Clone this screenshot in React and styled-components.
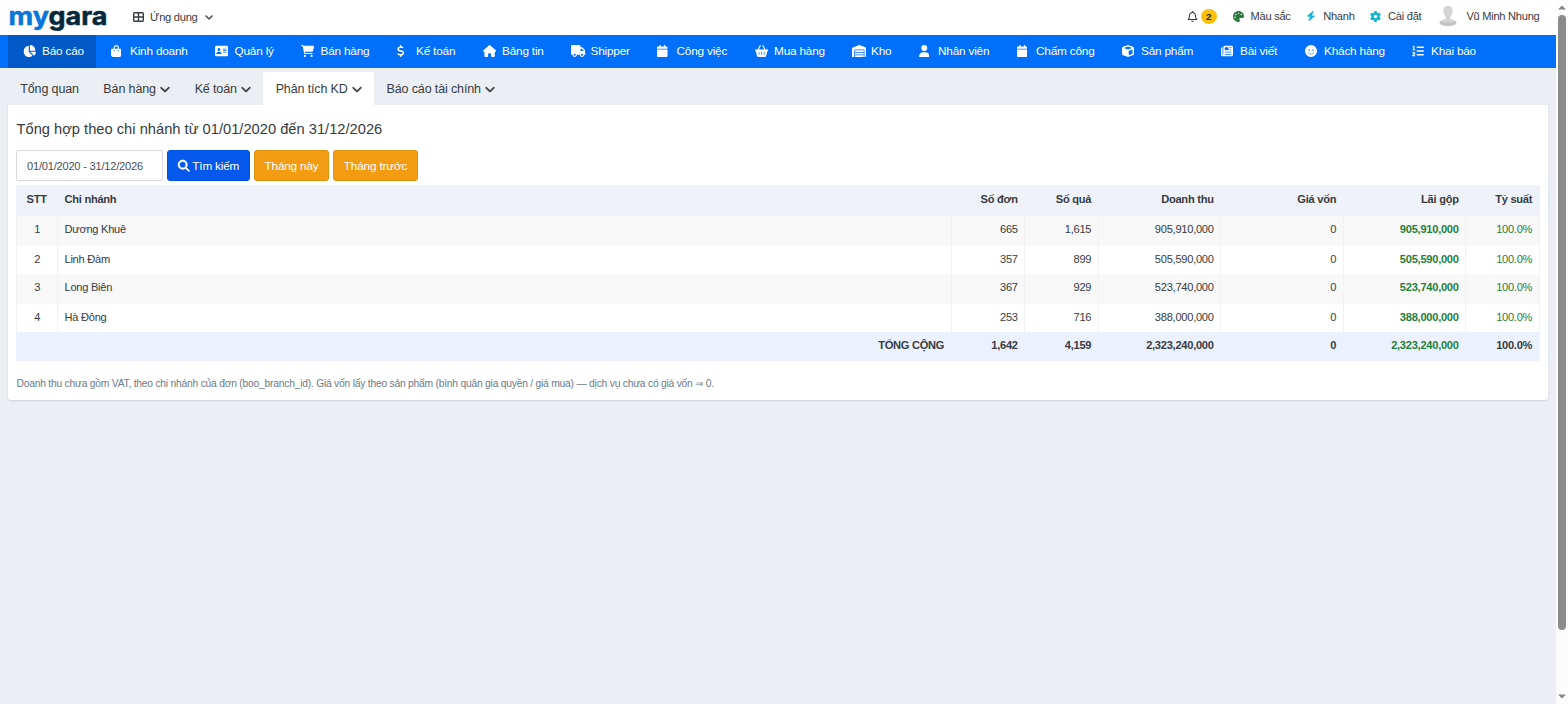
import React from 'react';
import styled, { createGlobalStyle } from 'styled-components';
import {
  FaChartPie, FaBagShopping, FaAddressCard, FaCartShopping, FaDollarSign, FaHouse, FaTruck,
  FaCalendar, FaBasketShopping, FaWarehouse, FaUser, FaCube, FaNewspaper, FaFaceSmile,
  FaListOl, FaChevronDown, FaRegBell, FaPalette, FaBolt, FaGear, FaMagnifyingGlass,
} from 'react-icons/fa6';

const GlobalStyle = createGlobalStyle`
  * { box-sizing: border-box; }
  html, body { margin: 0; height: 100%; overflow: hidden; }
  body {
    background: #ebeef3;
    color: #373b41;
    font-family: "Liberation Sans", Arial, sans-serif;
    font-size: 11.1px;
    letter-spacing: -0.26px;
  }
`;

const Screen = styled.div`
  display: flex;
  height: 704px;
  width: 1568px;
`;

const Page = styled.div`
  flex: 1;
  min-width: 0;
`;

const TopBar = styled.header`
  display: flex;
  align-items: center;
  height: 35px;
  padding: 0 16.5px 3px 8px;
  background: #fff;
  white-space: nowrap;
`;

const Logo = styled.svg`
  display: block;
  width: 102px;
  height: 32px;
  letter-spacing: 0;
  text {
    font: 700 25px Inter, sans-serif;
    stroke-width: 0.5px;
  }
`;

const AppsMenu = styled.div`
  display: flex;
  align-items: center;
  padding: 1px 0 0 23px;
  span { margin: 0 7px 0 6px; }
`;

const TopLinks = styled.div`
  display: flex;
  align-items: center;
  margin-left: auto;
`;

const TopLink = styled.div`
  display: flex;
  align-items: center;
  gap: ${(p) => p.$gap}px;
  margin-left: ${(p) => p.$space}px;
  svg { color: ${(p) => p.$color}; flex: none; }
`;

const CountBadge = styled.span`
  width: 16px;
  height: 15px;
  border-radius: 8px;
  background: #fec10b;
  color: #222;
  font-weight: 700;
  font-size: 9.8px;
  line-height: 15px;
  text-align: center;
`;

const NavBar = styled.nav`
  display: flex;
  height: 33px;
  padding-left: 8px;
  background: #006ffa;
  color: #fff;
  font-size: 11.8px;
  letter-spacing: -0.2px;
  white-space: nowrap;
`;

const NavItem = styled.a`
  display: flex;
  align-items: center;
  flex: none;
  width: ${(p) => p.$width}px;
  padding: 0 0 1px 14.5px;
  background: ${(p) => (p.$active ? '#0059c6' : 'transparent')};
`;

const NavIcon = styled.span`
  display: flex;
  flex: none;
  width: 19.5px;
  svg {
    flex: none;
    width: ${(p) => p.$width}px;
    height: 12px;
  }
`;

const Tabs = styled.div`
  display: flex;
  height: 37px;
  padding: 4px 8px 0;
  font-size: 12.5px;
  letter-spacing: -0.13px;
  white-space: nowrap;
`;

const Chevron = styled(FaChevronDown)`
  width: ${(p) => p.$size}px;
  height: ${(p) => p.$size}px;
  stroke: currentColor;
  stroke-width: 32px;
  overflow: visible;
`;

const Tab = styled.a`
  display: flex;
  align-items: center;
  gap: 4.3px;
  padding: 0 12.25px;
  background: ${(p) => (p.$active ? '#fff' : 'transparent')};
  border-radius: 3px 3px 0 0;
`;

const Panel = styled.main`
  height: 295px;
  margin: 0 8px;
  padding: 0 8px;
  background: #fff;
  border-radius: 0 0 3px 3px;
  box-shadow: 0 1px 2px rgba(40, 60, 90, 0.16);
`;

const Title = styled.h1`
  height: 45px;
  margin: 0;
  padding-left: 0.5px;
  font-size: 14.7px;
  font-weight: 400;
  letter-spacing: 0;
  line-height: 48px;
`;

const Filters = styled.div`
  display: flex;
  gap: 4px;
  height: 35px;
`;

const DateField = styled.div`
  width: 147px;
  height: 31px;
  padding-left: 10px;
  border: 1px solid #d5d8dc;
  border-radius: 2px;
  letter-spacing: -0.22px;
  line-height: 30px;
  color: #4b4f55;
`;

const Button = styled.button`
  display: flex;
  align-items: center;
  justify-content: center;
  gap: 3px;
  width: ${(p) => p.$width}px;
  height: 31px;
  padding: 1px 0 0;
  border: 1px solid ${(p) => (p.$primary ? '#0050dc' : '#e0900c')};
  border-radius: 3px;
  background: ${(p) => (p.$primary ? '#0459ec' : '#f39c12')};
  color: #fff;
  font: 11.8px "Liberation Sans", Arial, sans-serif;
  letter-spacing: -0.2px;
  svg { stroke: currentColor; stroke-width: 26px; overflow: visible; }
`;

const Table = styled.table`
  width: 1523.5px;
  table-layout: fixed;
  border-collapse: separate;
  border-spacing: 0;
`;

const Row = styled.tr`
  height: ${(p) => p.$height}px;
  background: ${(p) => p.$bg};
  td, th {
    padding-bottom: ${(p) => p.$bottom ?? 3}px;
    border-right: 1px solid ${(p) => p.$line};
  }
  td:first-child { border-left: 1px solid ${(p) => p.$line}; }
`;

const Cell = styled.td`
  padding: 0 6.3px 0 7px;
  line-height: 14px;
  text-align: ${(p) => p.$align || 'right'};
  font-weight: ${(p) => (p.$bold ? 700 : 400)};
  color: ${(p) => (p.$green ? '#1f8038' : 'inherit')};
`;

const Note = styled.p`
  margin: 16px 0 0;
  padding-left: 0.5px;
  font-size: 10.3px;
  letter-spacing: -0.23px;
  line-height: 14px;
  color: #6c7a89;
`;

const ScrollTrack = styled.div`
  display: flex;
  flex-direction: column;
  align-items: center;
  width: 12px;
  padding: 5px 0 5px;
  background: #fcfcfc;
  svg { display: block; }
`;

const ScrollThumb = styled.div`
  width: 8px;
  height: 615px;
  margin: 5px 0 auto;
  border-radius: 4px;
  background: #8b8b8b;
`;

const navItems = [
  { label: 'Báo cáo', Icon: FaChartPie, icon: 13, width: 88, active: true },
  { label: 'Kinh doanh', Icon: FaBagShopping, icon: 10.5, width: 104.5 },
  { label: 'Quản lý', Icon: FaAddressCard, icon: 13, width: 86 },
  { label: 'Bán hàng', Icon: FaCartShopping, icon: 13.2, width: 95.5 },
  { label: 'Kế toán', Icon: FaDollarSign, icon: 7.5, width: 86 },
  { label: 'Bảng tin', Icon: FaHouse, icon: 13.2, width: 88.5 },
  { label: 'Shipper', Icon: FaTruck, icon: 14.7, width: 86 },
  { label: 'Công việc', Icon: FaCalendar, icon: 10.5, width: 97.5 },
  { label: 'Mua hàng', Icon: FaBasketShopping, icon: 13.2, width: 97 },
  { label: 'Kho', Icon: FaWarehouse, icon: 14.7, width: 67 },
  { label: 'Nhân viên', Icon: FaUser, icon: 10.5, width: 98 },
  { label: 'Chấm công', Icon: FaCalendar, icon: 10.5, width: 105 },
  { label: 'Sản phẩm', Icon: FaCube, icon: 12, width: 99 },
  { label: 'Bài viết', Icon: FaNewspaper, icon: 12, width: 84 },
  { label: 'Khách hàng', Icon: FaFaceSmile, icon: 12, width: 107 },
  { label: 'Khai báo', Icon: FaListOl, icon: 12, width: 92 },
];

const tabs = [
  { label: 'Tổng quan' },
  { label: 'Bán hàng', menu: true },
  { label: 'Kế toán', menu: true },
  { label: 'Phân tích KD', menu: true, active: true },
  { label: 'Báo cáo tài chính', menu: true },
];

const branches = [
  { name: 'Dương Khuê', orders: '665', items: '1,615', revenue: '905,910,000', height: 30, bottom: 3.5 },
  { name: 'Linh Đàm', orders: '357', items: '899', revenue: '505,590,000', height: 27.5, bottom: 1 },
  { name: 'Long Biên', orders: '367', items: '929', revenue: '523,740,000', height: 30.5, bottom: 3 },
  { name: 'Hà Đông', orders: '253', items: '716', revenue: '388,000,000', height: 27.5, bottom: 1 },
];

const columns = [41.5, 894, 73.5, 73.5, 122.5, 122.5, 122.5, 73.5];

const AppsIcon = () => (
  <svg width="11" height="10" viewBox="0 0 11 10" fill="none" stroke="currentColor" strokeWidth="1.4">
    <rect x="0.7" y="0.7" width="9.6" height="8.6" rx="1" />
    <path d="M5.5 1v8M1 5h9" />
  </svg>
);

const Avatar = () => (
  <svg width="18" height="20" viewBox="0 0 18 20">
    <path d="M9 0C5.500 0 4.200 2 4.400 5c.1 2.500 1 4.600 2.300 5.700v2C4.500 13.500 1 14.500.5 17 1.500 19 5 20 9 20s7.500-1 8.500-3c-.5-2.500-4-3.500-6.200-4.300v-2C12.600 9.600 13.500 7.500 13.600 5 13.800 2 12.500 0 9 0z" fill="#d4d4d4" />
    <path d="M2 14.800c2 2.500 12 2.500 14 0 .8.600 1.300 1.300 1.500 2.200-1 2-4.500 3-8.500 3s-7.500-1-8.500-3c.2-.9.700-1.600 1.500-2.200z" fill="#c4c4c4" />
  </svg>
);

const Arrow = ({ down }) => (
  <svg width="8" height="5" viewBox="0 0 8 5">
    <path d={down ? 'M0 0.500h8L4 4.500z' : 'M0 4.500h8L4 0.500z'} fill="#858585" />
  </svg>
);

export default function App() {
  return (
    <Screen>
      <GlobalStyle />
      <Page>
        <TopBar>
          <Logo viewBox="0 0 102 32">
            <text x="0.5" y="24.500" textLength="99" lengthAdjust="spacingAndGlyphs">
              <tspan fill="#0876d9" stroke="#0876d9">my</tspan><tspan fill="#06283a" stroke="#06283a">gara</tspan>
            </text>
          </Logo>
          <AppsMenu>
            <AppsIcon /><span>Ứng dụng</span><Chevron $size={8} />
          </AppsMenu>
          <TopLinks>
            <TopLink $gap={3} $space={0} $color="#373b41"><FaRegBell size={11} /><CountBadge>2</CountBadge></TopLink>
            <TopLink $gap={7} $space={16} $color="#2c7a3f"><FaPalette size={11} />Màu sắc</TopLink>
            <TopLink $gap={7} $space={15.5} $color="#12b5d3"><FaBolt size={10} />Nhanh</TopLink>
            <TopLink $gap={7} $space={15.5} $color="#12b5d3"><FaGear size={11} />Cài đặt</TopLink>
            <TopLink $gap={9} $space={18} $color="#ccc"><Avatar />Vũ Minh Nhung</TopLink>
          </TopLinks>
        </TopBar>
        <NavBar>
          {navItems.map(({ label, Icon, icon, width, active }) => (
            <NavItem key={label} $width={width} $active={active}>
              <NavIcon $width={icon}><Icon preserveAspectRatio="none" /></NavIcon>{label}
            </NavItem>
          ))}
        </NavBar>
        <Tabs>
          {tabs.map(({ label, menu, active }) => (
            <Tab key={label} $active={active}>{label}{menu && <Chevron $size={10} />}</Tab>
          ))}
        </Tabs>
        <Panel>
          <Title>Tổng hợp theo chi nhánh từ 01/01/2020 đến 31/12/2026</Title>
          <Filters>
            <DateField>01/01/2020 - 31/12/2026</DateField>
            <Button $primary $width={83}><FaMagnifyingGlass size={11.5} />Tìm kiếm</Button>
            <Button $width={75}>Tháng này</Button>
            <Button $width={85}>Tháng trước</Button>
          </Filters>
          <Table>
            <colgroup>{columns.map((w, i) => <col key={i} width={w} />)}</colgroup>
            <thead>
              <Row $height={31} $bg="#eff3f9" $line="#eff3f9">
                <Cell as="th" $bold $align="center">STT</Cell>
                <Cell as="th" $bold $align="left">Chi nhánh</Cell>
                {['Số đơn', 'Số quả', 'Doanh thu', 'Giá vốn', 'Lãi gộp', 'Tỷ suất'].map((h) => (
                  <Cell as="th" $bold key={h}>{h}</Cell>
                ))}
              </Row>
            </thead>
            <tbody>
              {branches.map((b, i) => (
                <Row key={b.name} $height={b.height} $bottom={b.bottom} $bg={i % 2 ? '#fff' : '#f8f8f8'} $line="#f1f2f4">
                  <Cell $align="center">{i + 1}</Cell>
                  <Cell $align="left">{b.name}</Cell>
                  <Cell>{b.orders}</Cell>
                  <Cell>{b.items}</Cell>
                  <Cell>{b.revenue}</Cell>
                  <Cell>0</Cell>
                  <Cell $bold $green>{b.revenue}</Cell>
                  <Cell $green>100.0%</Cell>
                </Row>
              ))}
              <Row $height={29.5} $bg="#ebf2fe" $line="#ebf2fe">
                <Cell $bold colSpan={2}>TỔNG CỘNG</Cell>
                <Cell $bold>1,642</Cell>
                <Cell $bold>4,159</Cell>
                <Cell $bold>2,323,240,000</Cell>
                <Cell $bold>0</Cell>
                <Cell $bold $green>2,323,240,000</Cell>
                <Cell $bold>100.0%</Cell>
              </Row>
            </tbody>
          </Table>
          <Note>Doanh thu chưa gồm VAT, theo chi nhánh của đơn (boo_branch_id). Giá vốn lấy theo sản phẩm (bình quân gia quyền / giá mua) — dịch vụ chưa có giá vốn ⇒ 0.</Note>
        </Panel>
      </Page>
      <ScrollTrack><Arrow /><ScrollThumb /><Arrow down /></ScrollTrack>
    </Screen>
  );
}
